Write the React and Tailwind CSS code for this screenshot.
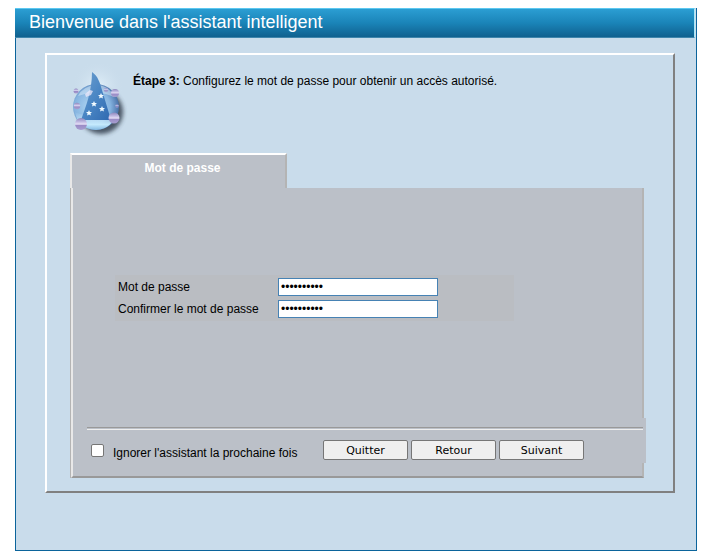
import { useState } from "react";

const STAR =
  "M0-3 .9-1 3-.9 1.400.5 2 2.600 0 1.400-2 2.600-1.400.5-3-.9-.9-1Z";

function WizardIcon() {
  return (
    <svg
      className="h-[77px] w-[63px] shrink-0"
      viewBox="0 0 63 77"
      aria-hidden="true"
    >
      <defs>
        <radialGradient id="halo">
          <stop offset="0" stopColor="#e4f2fb" />
          <stop offset="1" stopColor="#c9dceb" stopOpacity="0" />
        </radialGradient>
        <radialGradient id="globe" cx=".42" cy=".5" r=".6">
          <stop offset="0" stopColor="#b4daf5" />
          <stop offset=".65" stopColor="#86b4e0" />
          <stop offset="1" stopColor="#446ba4" />
        </radialGradient>
        <linearGradient id="shine" x1="0" y1="0" x2="0" y2="1">
          <stop offset="0" stopColor="#dff2ff" stopOpacity="0" />
          <stop offset=".7" stopColor="#c8edff" stopOpacity=".95" />
          <stop offset="1" stopColor="#8cc4ea" stopOpacity=".8" />
        </linearGradient>
        <linearGradient id="hat" x1="0" y1="0" x2="1" y2="1">
          <stop offset="0" stopColor="#6d9fce" />
          <stop offset=".5" stopColor="#4a86c4" />
          <stop offset="1" stopColor="#2f69b0" />
        </linearGradient>
        <linearGradient id="bead" x1="0" y1="0" x2="0" y2="1">
          <stop offset="0" stopColor="#8d86bb" />
          <stop offset=".3" stopColor="#bdb6e0" />
          <stop offset=".52" stopColor="#e6e0f6" />
          <stop offset=".6" stopColor="#9a8bc6" />
          <stop offset="1" stopColor="#a79fd0" />
        </linearGradient>
        <filter id="soft" x="-30%" y="-30%" width="160%" height="160%">
          <feGaussianBlur stdDeviation="2" />
        </filter>
      </defs>
      <circle cx="28" cy="24" r="26" fill="url(#halo)" />
      <circle cx="31" cy="49" r="22" fill="#34404f" opacity=".85" filter="url(#soft)" />
      <circle cx="26" cy="44" r="23" fill="url(#globe)" />
      <path d="M8 33Q13 23 26 22Q39 22 44 34Q27 26 8 33Z" fill="#d9ecfa" opacity=".5" />
      <path d="M5 49Q26 58 46 49Q43 66 26 67Q8 66 5 49Z" fill="url(#shine)" />
      <path d="M22 9C28 13 30 20 32 27L41 57H11C16 43 22 28 22 9Z" fill="url(#hat)" />
      <path d="M15 31 20 27 23 28 21 32 16 34Z" fill="#eee8fa" opacity=".75" />
      <g fill="#f2fbff">
        <path d={STAR} transform="translate(31 33)" />
        <path d={STAR} transform="translate(24 41)" />
        <path d={STAR} transform="translate(32 46)" />
        <path d={STAR} transform="translate(19 50)" />
      </g>
      <g fill="url(#bead)">
        <circle cx="6" cy="28" r="2.500" />
        <circle cx="7" cy="43" r="3.200" />
        <circle cx="36" cy="27" r="2.200" opacity=".8" />
        <circle cx="45" cy="30" r="4" />
        <circle cx="47" cy="43" r="1.800" opacity=".8" />
        <circle cx="11" cy="61" r="6" />
        <circle cx="44" cy="55" r="5.500" />
      </g>
    </svg>
  );
}

function PasswordRow({ id, label }) {
  const [value, setValue] = useState("motdepasse");
  return (
    <div className="flex items-center">
      <label htmlFor={id} className="w-40 shrink-0">
        {label}
      </label>
      <input
        id={id}
        type="password"
        value={value}
        onChange={(e) => setValue(e.target.value)}
        className="h-[18px] w-40 border border-[#4682b4] bg-white px-0.5 outline-none"
      />
    </div>
  );
}

function WizardButton({ children }) {
  return (
    <button
      type="button"
      className="flex h-5 w-[85px] items-center justify-center rounded-xs border border-[#767676] bg-[#efefef] pt-0.5 font-['DejaVu_Sans',sans-serif] text-[11px] leading-4"
    >
      {children}
    </button>
  );
}

export default function App() {
  return (
    <div className="bg-white pt-2 pr-[18px] pb-1.5 pl-[15px] font-['Liberation_Sans',Arial,sans-serif] text-xs text-black">
      <main className="border border-t-0 border-[#0b649b] bg-[#c9dceb] pb-[57px]">
        <header className="-ml-px mr-px flex h-[30px] items-center border-t border-r border-b border-t-[#5cc8f0] border-r-[#a5e8fa] border-b-[#3f86ac] bg-linear-to-b from-[#2b9ed3] via-[#1a84b8] to-[#10618f] pb-0.5 pl-3.5">
          <h1 className="text-lg leading-6 text-white">
            Bienvenue dans l'assistant intelligent
          </h1>
        </header>

        <section className="mt-[15px] mr-[21px] ml-[29px] border-2 border-t-white border-r-[#808080] border-b-[#808080] border-l-white pt-2 pr-[29px] pb-[13px] pl-[23px]">
          <div className="flex">
            <WizardIcon />
            <p className="pt-2.5 leading-4">
              <b>Étape 3:</b> Configurez le mot de passe pour obtenir un accès
              autorisé.
            </p>
          </div>

          <h2 className="mt-[13px] flex h-[35px] w-[217px] justify-center border-2 border-b-0 border-t-white border-r-[#b4b4b4] border-l-[#e8e8e8] bg-[#bbc0c8] pt-[3px] pl-2 leading-5 font-bold text-white">
            Mot de passe
          </h2>

          <div className="border-l border-[#b4b4b4]">
            <form className="border-r-2 border-b-2 border-l-2 border-r-[#b4b4b4] border-b-[#999999] border-l-[#e8e8e8] bg-[#bbc0c8] pt-[87px] pb-[13px]">
              <div className="mr-32 ml-[42px] flex flex-col gap-1 bg-[#babdc2] py-[3px] pl-[3px]">
                <PasswordRow id="password" label="Mot de passe" />
                <PasswordRow id="confirm" label="Confirmer le mot de passe" />
              </div>

              <div className="mt-[97px] -mr-1 bg-[#bbc0c8] pt-[9px] pr-[3px] pb-[3px] pl-3.5">
                <hr className="h-[3px] border-t border-b border-t-[#999999] border-b-[#eeeeee]" />
                <div className="mt-2.5 flex">
                  <label className="flex w-[236px] items-center pl-1">
                    <input
                      type="checkbox"
                      className="mr-[9px] size-[13px] appearance-none rounded-xs border border-[#767676] bg-white checked:bg-[#0075ff]"
                    />
                    <span className="pt-1.5 leading-3.5">
                      Ignorer l'assistant la prochaine fois
                    </span>
                  </label>
                  <div className="flex gap-[3px]">
                    <WizardButton>Quitter</WizardButton>
                    <WizardButton>Retour</WizardButton>
                    <WizardButton>Suivant</WizardButton>
                  </div>
                </div>
              </div>
            </form>
          </div>
        </section>
      </main>
    </div>
  );
}
